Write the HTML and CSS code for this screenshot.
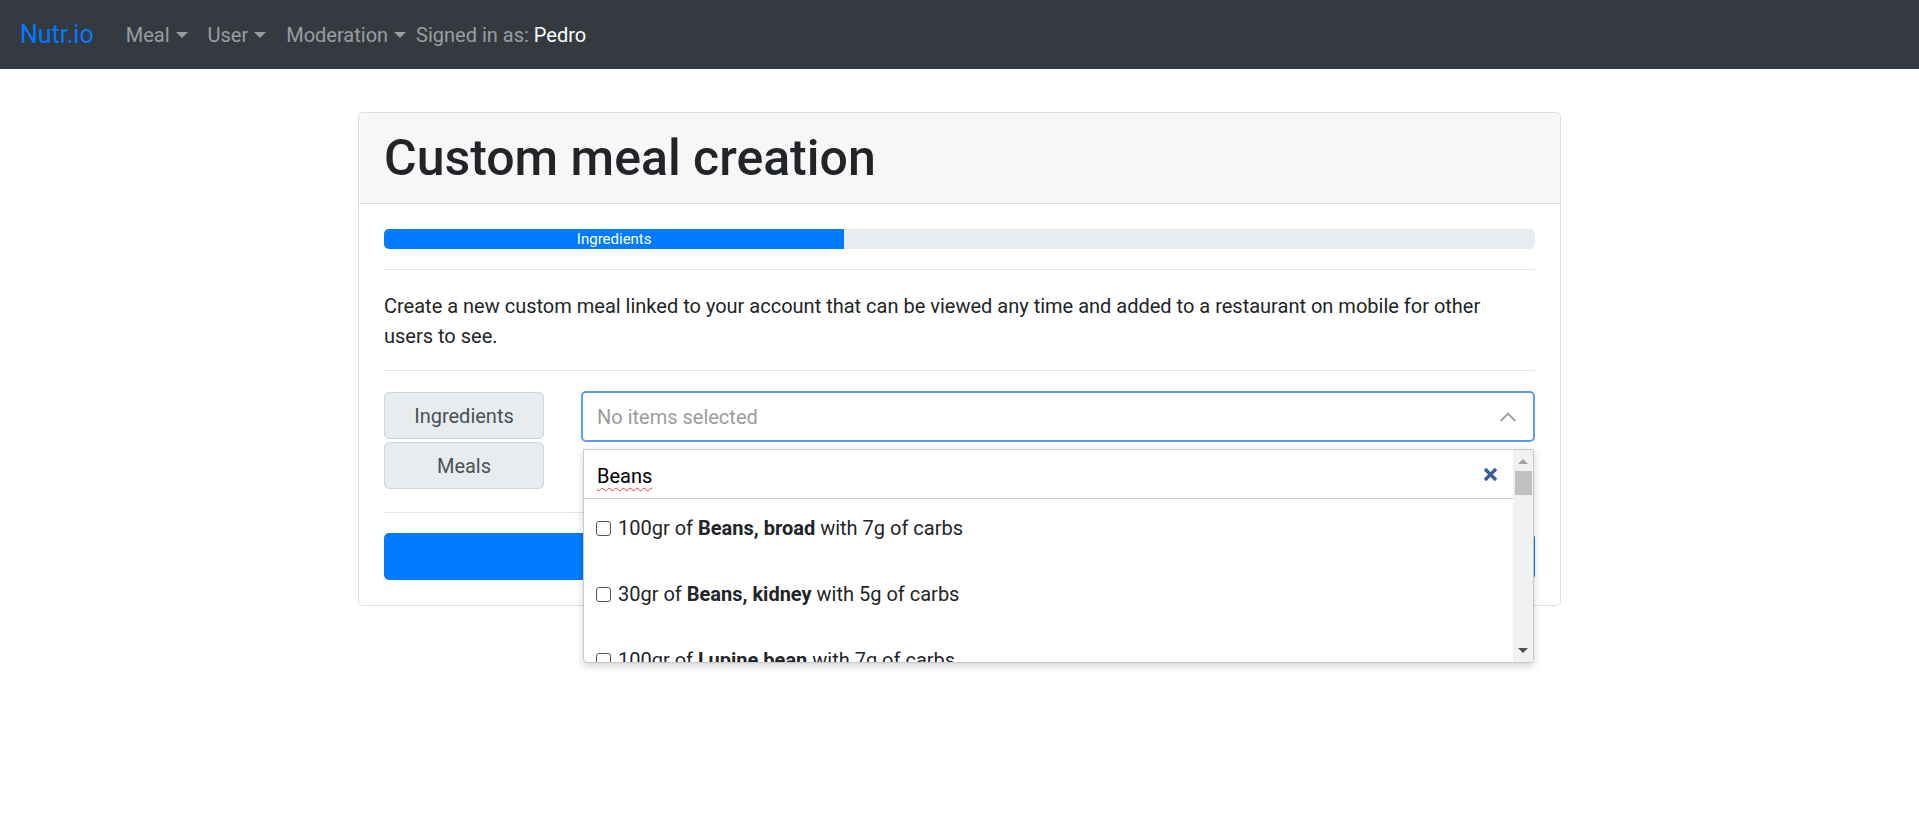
FILE: index.html
```html
<!DOCTYPE html>
<html lang="en">
<head>
<meta charset="utf-8">
<title>Nutr.io - Custom meal creation</title>
<link rel="stylesheet" href="styles.css">
</head>
<body>
<nav class="navbar">
  <a class="brand" href="#">Nutr.io</a>
  <ul class="nav">
    <li class="nav-link dropdown-toggle">Meal</li>
    <li class="nav-link dropdown-toggle">User</li>
    <li class="nav-link dropdown-toggle">Moderation</li>
  </ul>
  <span class="navbar-text">Signed in as: <span class="username">Pedro</span></span>
</nav>

<main class="container">
  <div class="card">
    <div class="card-header">
      <h1 class="title">Custom meal creation</h1>
    </div>
    <div class="card-body">
      <div class="progress">
        <div class="progress-bar" style="width:40%">Ingredients</div>
      </div>
      <hr class="divider">
      <p class="description">Create a new custom meal linked to your account that can be viewed any time and added to a restaurant on mobile for other users to see.</p>
      <hr class="divider">
      <div class="picker-row">
        <div class="tab-buttons">
          <button class="tab-btn">Ingredients</button>
          <button class="tab-btn">Meals</button>
        </div>
        <div class="multiselect">
          <div class="ms-toggle">
            <span class="ms-placeholder">No items selected</span>
            <svg class="ms-chevron" width="18" height="10" viewBox="0 0 18 10"><path d="M1.5 9 L9 1.8 L16.5 9" fill="none" stroke="#a8a8a8" stroke-width="2.2"/></svg>
          </div>
          <div class="ms-dropdown">
            <div class="ms-content">
              <div class="ms-search">
                <span class="ms-query">Beans</span>
                <svg class="ms-clear" width="15" height="15" viewBox="0 0 15 15"><path d="M2 2 L13 13 M13 2 L2 13" stroke="#3b5d9a" stroke-width="3.4" stroke-linecap="butt"/></svg>
              </div>
              <ul class="ms-list">
                <li class="ms-item"><span class="check"></span>100gr of <b>Beans, broad</b> with 7g of carbs</li>
                <li class="ms-item"><span class="check"></span>30gr of <b>Beans, kidney</b> with 5g of carbs</li>
                <li class="ms-item"><span class="check"></span>100gr of <b>Lupine bean</b> with 7g of carbs</li>
              </ul>
            </div>
            <div class="scrollbar">
              <span class="sb-up"></span>
              <span class="sb-thumb"></span>
              <span class="sb-down"></span>
            </div>
          </div>
        </div>
      </div>
      <hr class="divider">
      <button class="btn-primary">Next</button>
    </div>
  </div>
</main>
</body>
</html>
```
FILE: styles.css
```css
* { box-sizing: border-box; }

html { height: 100%; }

body {
  margin: 0;
  min-height: 832px;
  font-family: Roboto, "Noto Sans", Arial, sans-serif;
  font-size: 20px;
  line-height: 1.5;
  color: #212529;
  background: #fff;
}

/* Navbar */
.navbar {
  height: 69px;
  background: #343a40;
  display: flex;
  align-items: center;
  padding: 1px 20px 0 20px;
}
.brand {
  font-size: 25px;
  color: #007bff;
  text-decoration: none;
  margin-right: 22px;
  line-height: 1.5;
}
.nav {
  display: flex;
  list-style: none;
  margin: 0;
  padding: 0;
}
.nav-link {
  color: rgba(255, 255, 255, 0.5);
  padding: 0 10px;
}
.dropdown-toggle::after {
  content: "";
  display: inline-block;
  margin-left: 6px;
  vertical-align: 4px;
  border-top: 6px solid;
  border-left: 6px solid transparent;
  border-right: 6px solid transparent;
}
.navbar-text {
  color: rgba(255, 255, 255, 0.5);
}
.username { color: #fff; }

/* Card */
.container {
  width: 1203px;
  margin: 43px auto 0;
}
.card {
  border: 1px solid rgba(0, 0, 0, 0.125);
  border-radius: 5px;
  background: #fff;
}
.card-header {
  background: #f7f7f7;
  border-bottom: 1px solid rgba(0, 0, 0, 0.125);
  padding: 15px 25px;
  border-radius: 5px 5px 0 0;
}
.title {
  margin: 0;
  font-size: 50px;
  font-weight: 500;
  line-height: 60px;
}
.card-body {
  padding: 25px;
}

/* Progress */
.progress {
  height: 20px;
  background: #e9ecef;
  border-radius: 5px;
  overflow: hidden;
  display: flex;
}
.progress-bar {
  background: #007bff;
  color: #fff;
  font-size: 15px;
  line-height: 20px;
  text-align: center;
}

.divider {
  margin: 20px 0;
  border: 0;
  border-top: 1px solid rgba(0, 0, 0, 0.1);
}

.description {
  margin: 0 0 20px;
  padding-top: 1px;
  height: 60px;
  max-width: 1120px;
}

/* Picker */
.picker-row {
  display: flex;
  gap: 37px;
  padding-bottom: 3px;
}
.tab-buttons {
  width: 160px;
  display: flex;
  flex-direction: column;
  gap: 3px;
  padding-top: 1px;
}
.tab-btn {
  height: 47px;
  font: inherit;
  color: #495057;
  background: #e9ecef;
  border: 1px solid #ced4da;
  border-radius: 5px;
  padding: 0;
}
.multiselect {
  flex: 1;
  position: relative;
}
.ms-toggle {
  height: 51px;
  border: 2px solid #5a9af4;
  border-radius: 5px;
  display: flex;
  align-items: center;
  justify-content: space-between;
  padding: 0 16px 0 14px;
}
.ms-placeholder { color: #9c9c9c; }
.ms-chevron { display: block; }

.ms-dropdown {
  position: absolute;
  z-index: 10;
  top: 58px;
  left: 2px;
  right: 1px;
  height: 214px;
  background: #fff;
  border: 1px solid #c9c9c9;
  border-radius: 0 0 4px 4px;
  box-shadow: 0 3px 8px rgba(0, 0, 0, 0.18);
  display: flex;
  overflow: hidden;
}
.ms-content {
  flex: 1;
  overflow: hidden;
}
.ms-search {
  height: 49px;
  border-bottom: 1px solid #c8c8c8;
  display: flex;
  align-items: center;
  justify-content: space-between;
  padding: 3px 15px 0 13px;
}
.ms-query {
  color: #000;
  text-decoration: underline wavy #e33;
  text-decoration-thickness: 1px;
  text-underline-offset: 4px;
}
.ms-clear { display: block; margin-top: -2px; }
.ms-list {
  list-style: none;
  margin: 0;
  padding: 0;
}
.ms-item {
  display: flex;
  align-items: center;
  padding: 14px 12px 22px;
  white-space: pre;
}
.ms-item b { font-weight: 700; }
.check {
  width: 15px;
  height: 15px;
  border: 1.5px solid #555;
  border-radius: 3px;
  margin-right: 7px;
  flex: none;
}

/* fake scrollbar */
.scrollbar {
  width: 20px;
  background: #f1f1f1;
  position: relative;
  flex: none;
}
.sb-up, .sb-down {
  position: absolute;
  left: 5px;
  border-left: 5px solid transparent;
  border-right: 5px solid transparent;
}
.sb-up {
  top: 9px;
  border-bottom: 5px solid #a3a3a3;
}
.sb-down {
  bottom: 9px;
  border-top: 5px solid #505050;
}
.sb-thumb {
  position: absolute;
  top: 21px;
  left: 2px;
  width: 17px;
  height: 24px;
  background: #c1c1c1;
}

.btn-primary {
  display: block;
  width: 100%;
  height: 47px;
  font: inherit;
  color: #fff;
  background: #007bff;
  border: 1px solid #007bff;
  border-radius: 5px;
}
```
